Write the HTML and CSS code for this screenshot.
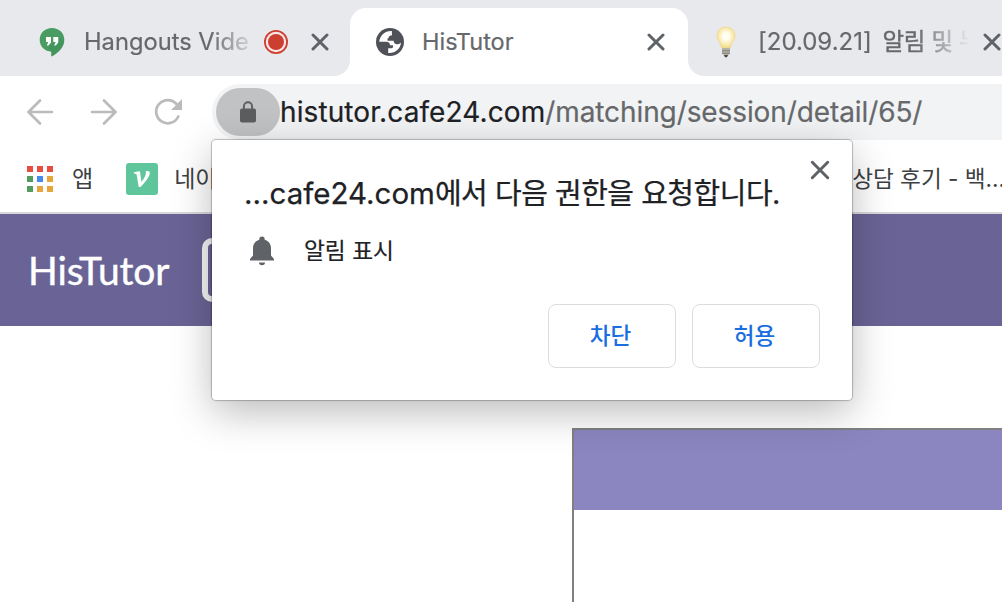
FILE: index.html
```
<!DOCTYPE html>
<html lang="ko">
<head>
<meta charset="utf-8">
<title>HisTutor</title>
<link rel="stylesheet" href="styles.css">
</head>
<body>
<div class="window">
  <div class="tabs">
    <div class="tab tab-first">
      <svg class="favicon" width="26" height="30" viewBox="0 0 26 30"><path fill="#4a9d62" d="M13 1C6 1 .7 6 .7 12.8.700 19.500 6 24.500 12.300 24.700V29.500C19 26.500 25.300 20 25.300 12.800 25.300 6 20 1 13 1Z"/><path fill="#3f8b56" d="M12 18 19 10 25.200 14.500C24.500 21 18.500 27 12.300 29.500V24.700L9 21Z" opacity=".45"/><path fill="#fff" d="M7 10h5v5.500L9.500 18.500H7.800L9.300 15H7ZM14.300 10h5v5.500l-2.500 3h-1.700l1.500-3.500h-2.300Z"/></svg>
      <div class="title title-one">Hangouts Vide</div>
      <svg class="record" width="24" height="24" viewBox="0 0 24 24"><circle cx="12" cy="12" r="11.100" fill="#fbe9e7" stroke="#cc3e2f" stroke-width="1.800"/><circle cx="12" cy="12" r="8" fill="#cc3e2f"/></svg>
      <svg class="close" width="18" height="18" viewBox="0 0 18 18"><path d="M2 2 16 16M16 2 2 16"/></svg>
    </div>
    <div class="tab tab-active">
      <svg class="favicon" width="28" height="28" viewBox="0 0 28 28"><circle cx="14" cy="14" r="14" fill="#50525a"/><path fill="#fff" d="M15.800 3C9.500 2.500 4 7 3.200 13.800H10.500C12.500 13.800 14 15 14 17.300H17V18.500C17 20 16 20.200 14.500 20.200H12.200V24.900C19 25.500 24.500 21 25 14.500 23.500 16 22.300 16.300 21 16.300 18.800 16.300 17.800 15 17.600 12.800H11.500V10.200H12.500C12.800 8.200 14 7.300 16 7.300Z"/></svg>
      <div class="title title-two">HisTutor</div>
      <svg class="close" width="18" height="18" viewBox="0 0 18 18"><path d="M2 2 16 16M16 2 2 16"/></svg>
    </div>
    <div class="tab tab-last">
      <svg class="favicon" width="20" height="32" viewBox="0 0 20 32"><defs><radialGradient id="glow" cx=".5" cy=".45" r=".55"><stop offset=".3" stop-color="#fffef0"/><stop offset="1" stop-color="#f5dc84"/></radialGradient></defs><path fill="url(#glow)" stroke="#ecd58a" stroke-width=".7" d="M10 1C4.800 1 1 4.800 1 9.800c0 4.200 4 7.200 4.800 12.200h8.400C15 17 19 14 19 9.800 19 4.800 15.200 1 10 1Z"/><path fill="#b5b2a8" d="M6 22h8v5.500L12 29.500H8L6 27.500Z"/><path fill="#85827a" d="M6 24.200h8v1H6ZM6 26.700h8v1H6Z"/><path fill="#444" d="M8 29h4l-1 2.300H9Z"/></svg>
      <div class="title title-three">[20.09.21] <span class="tab-ko">알림 및 누</span></div>
      <svg class="close" width="18" height="18" viewBox="0 0 18 18"><path d="M2 2 16 16M16 2 2 16"/></svg>
    </div>
  </div>

  <div class="toolbar">
    <svg class="nav" width="28" height="28" viewBox="0 0 28 28"><path d="M26 14H3M14 2.500 2.500 14 14 25.500"/></svg>
    <svg class="nav" width="28" height="28" viewBox="0 0 28 28"><path d="M2 14H25M14 2.500 25.500 14 14 25.500"/></svg>
    <svg class="nav" width="28" height="28" viewBox="0 0 28 28"><path d="M24.300 18.500A11.600 11.600 0 1 1 22.500 6"/><path class="solid" d="M28 1V12H17Z"/></svg>
    <div class="omnibox">
      <div class="lock"><svg width="16" height="22" viewBox="0 0 16 22"><path fill="none" stroke="#5c5d5f" stroke-width="1.900" d="M3.900 9V5.400a4.100 4.100 0 0 1 8.200 0V9"/><rect y="7.500" width="16" height="14" rx="2" fill="#5c5d5f"/></svg></div>
      <div class="url"><span class="host">histutor.cafe24.com</span><span class="path">/matching/session/detail/65/</span></div>
    </div>
  </div>

  <div class="bookmarks">
    <div class="apps"><i class="r"></i><i class="r"></i><i class="r"></i><i class="g"></i><i class="b"></i><i class="y"></i><i class="g"></i><i class="y"></i><i class="y"></i></div>
    <span class="bm-apps">앱</span>
    <svg class="velog" width="32" height="32" viewBox="0 0 32 32"><rect width="32" height="32" rx="3" fill="#5fc69b"/><path fill="#fff" d="M8 9.300 13 8.300c.7 0 1 .2 1.100 1l1.300 9.500c2.700-3.300 4.500-6.600 4.500-8.600 0-1.200-.5-1.600.1-2 .8-.6 3.800-.5 3.800 1.700 0 3.400-4 8.500-9.300 14h-1.800L10.500 11 8 10.600Z"/></svg>
    <span class="bm-naver">네이버</span>
    <span class="bm-last">상담 후기 - 백...</span>
  </div>

  <div class="site-header">
    <div class="logo">HisTutor</div>
    <div class="menu-box"></div>
  </div>
  <div class="content"><div class="card"><div class="card-head"></div></div></div>
</div>

<div class="dialog">
  <div class="dialog-top">
    <div class="dialog-title">...cafe24.com<span class="ko">에서 다음 권한을 요청합니다.</span></div>
    <svg class="dialog-close" width="20" height="20" viewBox="0 0 20 20"><path d="M2.300 2.300 17.700 17.700M17.700 2.300 2.300 17.700"/></svg>
  </div>
  <div class="permission">
    <svg width="24" height="30" viewBox="0 0 24 30"><path fill="#5f6368" d="M12 .5a2.700 2.700 0 0 1 2.700 2.700v.6C18.500 5 21 8 21 12v7.500l3 3.500v1.500H0V23l3-3.500V12C3 8 5.500 5 9.300 3.800v-.6A2.700 2.700 0 0 1 12 .5ZM9 26.500h6a3 2.800 0 0 1-6 0Z"/></svg>
    <span class="permission-name">알림 표시</span>
  </div>
  <div class="actions">
    <button class="btn">차단</button>
    <button class="btn">허용</button>
  </div>
</div>
</body>
</html>
```
FILE: styles.css
```
* { box-sizing: border-box; }
body {
  margin: 0;
  width: 1002px;
  height: 602px;
  overflow: hidden;
  background: #fff;
  position: relative;
  font-family: Inter, "Noto Sans CJK KR", sans-serif;
}
svg { display: block; flex: none; }
.window { width: 1002px; height: 602px; overflow: hidden; display: flex; flex-direction: column; }

.tabs { height: 76px; flex: none; display: flex; background: linear-gradient(#e8e9ed 0 40px, #fff 40px); }
.tab { height: 76px; flex: none; display: flex; align-items: center; padding-top: 8px; background: #e8e9ed; }
.tab-first { width: 350px; padding-left: 39px; border-bottom-right-radius: 16px; }
.tab-active { width: 338px; height: 68px; margin-top: 8px; padding: 0 0 0 26px; background: #fff; border-radius: 16px 16px 0 0; }
.tab-last { width: 314px; padding-left: 28px; border-bottom-left-radius: 16px; }
.title { height: 32px; line-height: 32px; font-size: 24px; color: #66686c; white-space: nowrap; -webkit-text-stroke: .2px; }
.title-one {
  width: 166px;
  margin-left: 19px;
  font-size: 23.700px;
  -webkit-mask-image: linear-gradient(90deg, #000 126px, transparent 174px);
  mask-image: linear-gradient(90deg, #000 126px, transparent 174px);
}
.title-two { width: 220px; margin-left: 18px; font-size: 23.500px; }
.title-three {
  width: 210px;
  margin-left: 22px;
  -webkit-mask-image: linear-gradient(90deg, #000 158px, transparent 212px);
  mask-image: linear-gradient(90deg, #000 158px, transparent 212px);
}
.tab-ko { font-size: 23.500px; margin-left: 4px; letter-spacing: -.3px; -webkit-text-stroke: .4px; }
.record { margin-left: 14px; }
.close path, .dialog-close path { fill: none; stroke: #5f6368; stroke-width: 3; stroke-linecap: round; }
.tab-first .close { margin-left: 23px; }
.tab-active .close { margin-left: 5px; }
.tab-last .close { margin-left: 15px; }

.toolbar { height: 64px; flex: none; padding: 8px 0 0 26px; display: flex; align-items: center; gap: 36px; }
.nav path { fill: none; stroke: #b9bbbd; stroke-width: 2.700; stroke-linecap: round; stroke-linejoin: round; }
.nav .solid { fill: #b9bbbd; stroke: none; }
.omnibox { flex: 1; height: 56px; margin-left: -6px; padding-left: 4px; border-radius: 28px 0 0 28px; background: #f1f3f4; display: flex; align-items: center; }
.lock { width: 64px; height: 48px; border-radius: 24px; background: #c1c2c4; display: flex; align-items: center; justify-content: center; }
.url { font-size: 28px; line-height: 40px; white-space: nowrap; color: #202124; -webkit-text-stroke: .2px; }
.host { letter-spacing: .1px; }
.path { color: #66686c; letter-spacing: -.1px; }

.bookmarks { height: 74px; flex: none; border-bottom: 2px solid #d9d9dc; padding: 6px 0 0 27px; display: flex; align-items: center; font-size: 23px; line-height: 32px; color: #3c4043; white-space: nowrap; }
.apps { display: grid; grid-template-columns: repeat(3, 6px); grid-auto-rows: 6px; gap: 4px; }
.r { background: #e84e40; }
.g { background: #549b60; }
.b { background: #4389f0; }
.y { background: #e6a63b; }
.bm-apps { margin-left: 19px; }
.velog { margin-left: 33px; }
.bm-naver { flex: none; margin-left: 16px; width: 678px; }
.bm-last { flex: none; font-size: 22.600px; }

.site-header { height: 112px; flex: none; background: #6a6496; display: flex; align-items: center; padding-left: 28px; }
.logo { width: 174px; padding-bottom: 1px; font: 39px/48px Lato, sans-serif; letter-spacing: -.1px; color: #fff; -webkit-text-stroke: .4px; }
.menu-box { width: 70px; height: 64px; border: 6px solid #f4f4f4; border-radius: 10px; }
.content { flex: 1; padding: 102px 0 0 572px; }
.card { height: 200px; border: 2px solid #808080; border-right: 0; }
.card-head { height: 80px; background: #8c86c0; }

.dialog {
  position: absolute;
  left: 212px;
  top: 140px;
  width: 640px;
  height: 260px;
  padding: 20px 22px 32px 32px;
  border-radius: 4px;
  background: #fff;
  box-shadow: 0 0 1px 1px rgba(0, 0, 0, .24), 0 12px 40px rgba(0, 0, 0, .27);
  color: #202124;
  display: flex;
  flex-direction: column;
}
.dialog-top { display: flex; justify-content: space-between; }
.dialog-title { font-size: 29.500px; line-height: 40px; padding-top: 13px; white-space: nowrap; -webkit-text-stroke: .25px; }
.ko { font-size: 29px; letter-spacing: -.5px; }
.permission { display: flex; align-items: center; gap: 30px; height: 32px; margin: 21px 0 0 6px; font-size: 22.700px; }
.permission-name { padding-bottom: 3px; -webkit-text-stroke: .2px; }
.actions { margin: auto 10px 0 0; display: flex; justify-content: flex-end; gap: 16px; }
.btn { width: 128px; height: 64px; border: 1px solid #dadce0; border-radius: 8px; background: #fff; color: #1a6ee0; font: 500 22.500px/32px "Noto Sans CJK KR", sans-serif; padding: 0 5px 5px 2px; }
```
